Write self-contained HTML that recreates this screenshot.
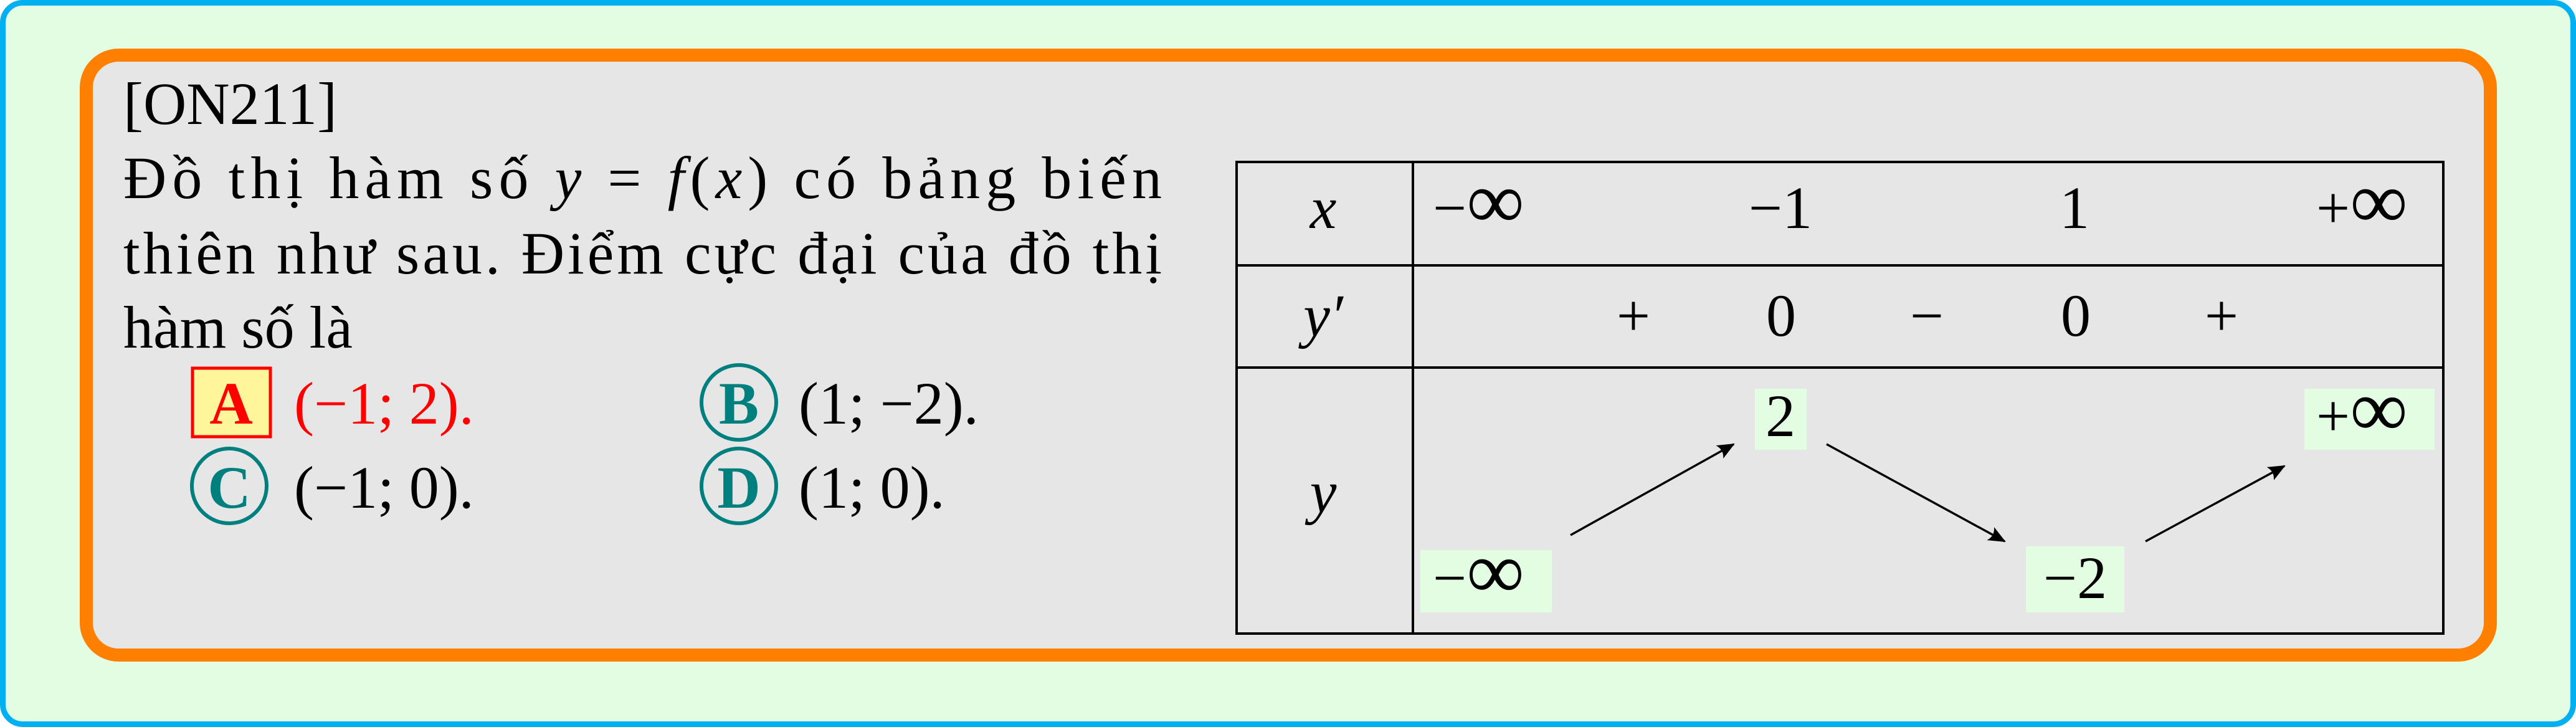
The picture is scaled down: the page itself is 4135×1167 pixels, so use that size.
<!DOCTYPE html>
<html><head><meta charset="utf-8"><style>
html,body{margin:0;padding:0;background:#fff}
svg{display:block}
text{font-family:"Liberation Serif",serif;font-size:96px;fill:#000}
.i{font-style:italic}
.inf{font-size:130px}
</style></head><body>
<svg width="4135" height="1167" viewBox="0 0 4135 1167" xmlns="http://www.w3.org/2000/svg">
<defs><marker id="ar" markerWidth="30" markerHeight="24" refX="26" refY="12" orient="auto" markerUnits="userSpaceOnUse"><path d="M0,0 L28,12 L0,24 Q8,12 0,0 Z" fill="#000"/></marker></defs>
<rect x="4.5" y="4.5" width="4126" height="1158" rx="32" fill="#e2fde2" stroke="#00b0f0" stroke-width="9"/>
<rect x="138.5" y="88.5" width="3859" height="963" rx="52" fill="#e6e6e6" stroke="#ff8000" stroke-width="21"/>
<text x="198" y="199">[ON211]</text>
<text x="198" y="318" textLength="1667" lengthAdjust="spacing">Đồ thị hàm số <tspan class="i">y</tspan> = <tspan class="i">f</tspan>(<tspan class="i">x</tspan>) có bảng biến</text>
<text x="198" y="439" textLength="1667" lengthAdjust="spacing">thiên như sau. Điểm cực đại của đồ thị</text>
<text x="198" y="558">hàm số là</text>
<rect x="309" y="591" width="125" height="110" fill="#fff59a" stroke="#ff0000" stroke-width="5"/>
<text x="371" y="680" text-anchor="middle" font-weight="bold" style="fill:#f00">A</text>
<text x="472" y="680" style="fill:#f00">(−1; 2).</text>
<circle cx="1186" cy="646" r="60" fill="none" stroke="#007f7f" stroke-width="6"/>
<text x="1186" y="680" text-anchor="middle" font-weight="bold" style="fill:#007f7f">B</text>
<text x="1282" y="680">(1; −2).</text>
<circle cx="368" cy="780" r="60" fill="none" stroke="#007f7f" stroke-width="6"/>
<text x="368" y="815" text-anchor="middle" font-weight="bold" style="fill:#007f7f">C</text>
<text x="472" y="815">(−1; 0).</text>
<circle cx="1186" cy="780" r="60" fill="none" stroke="#007f7f" stroke-width="6"/>
<text x="1186" y="815" text-anchor="middle" font-weight="bold" style="fill:#007f7f">D</text>
<text x="1282" y="815">(1; 0).</text>
<g stroke="#000" stroke-width="4" fill="none">
<rect x="1985" y="260" width="1937" height="757"/>
<line x1="2268" y1="260" x2="2268" y2="1017"/>
<line x1="1985" y1="426" x2="3922" y2="426"/>
<line x1="1985" y1="590" x2="3922" y2="590"/>
</g>
<text x="2124" y="366" text-anchor="middle" class="i">x</text>
<text x="2300" y="366">−<tspan class="inf">∞</tspan></text>
<text x="2858" y="366" text-anchor="middle">−1</text>
<text x="3330" y="366" text-anchor="middle">1</text>
<text x="3718" y="366">+<tspan class="inf">∞</tspan></text>
<text x="2124" y="539" text-anchor="middle" class="i">y′</text>
<text x="2622" y="539" text-anchor="middle">+</text>
<text x="2859" y="539" text-anchor="middle">0</text>
<text x="3093" y="539" text-anchor="middle">−</text>
<text x="3332" y="539" text-anchor="middle">0</text>
<text x="3566" y="539" text-anchor="middle">+</text>
<text x="2124" y="822" text-anchor="middle" class="i">y</text>
<g fill="#e2fde2">
<rect x="2817" y="624" width="83" height="98"/>
<rect x="3699" y="624" width="209" height="98"/>
<rect x="2280" y="883" width="211" height="100"/>
<rect x="3252" y="877" width="158" height="106"/>
</g>
<text x="2858" y="700" text-anchor="middle">2</text>
<text x="3718" y="700">+<tspan class="inf">∞</tspan></text>
<text x="2300" y="960">−<tspan class="inf">∞</tspan></text>
<text x="3331" y="960" text-anchor="middle">−2</text>
<g stroke="#000" stroke-width="3.5" marker-end="url(#ar)">
<line x1="2521" y1="859" x2="2783" y2="713"/>
<line x1="2932" y1="713" x2="3218" y2="869"/>
<line x1="3444" y1="869" x2="3667" y2="748"/>
</g>
</svg>
</body></html>
